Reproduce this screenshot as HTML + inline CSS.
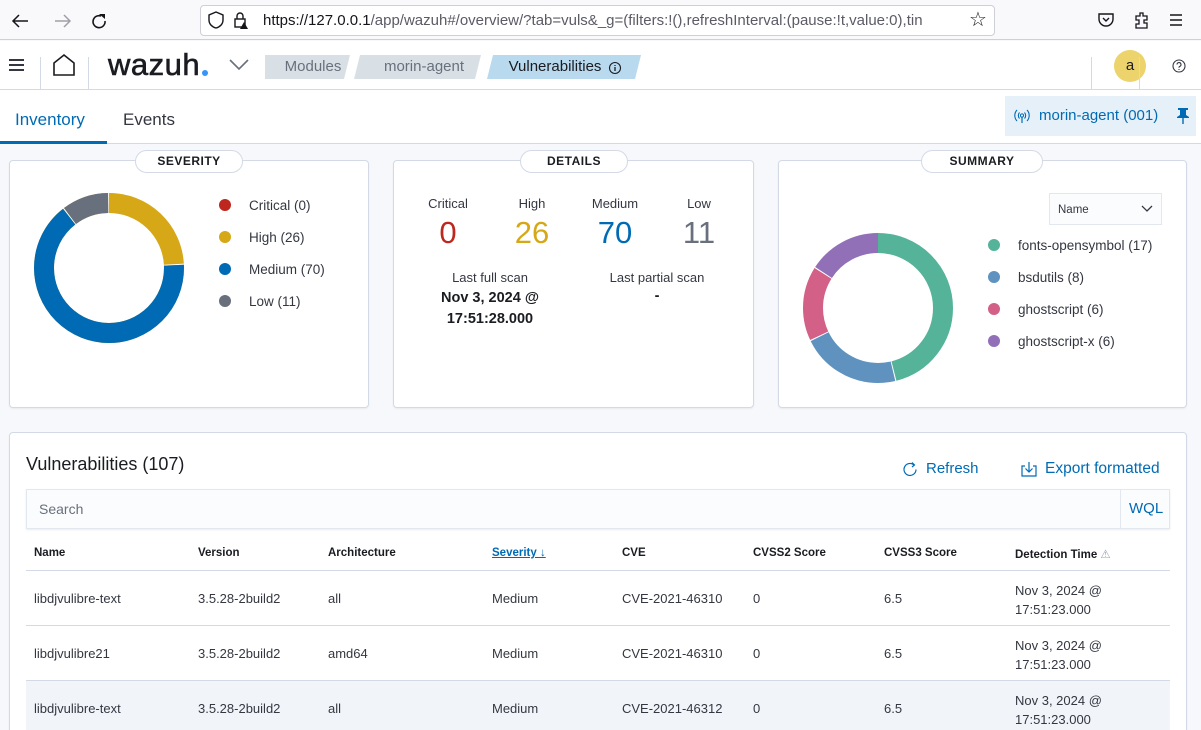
<!DOCTYPE html>
<html style="height:730px;overflow:hidden"><head><meta charset="utf-8">
<style>
*{box-sizing:border-box;margin:0;padding:0}
body{width:1201px;height:730px;overflow:hidden;background:#f7f8fc;font-family:"Liberation Sans",sans-serif;color:#343741;position:relative}
.abs{position:absolute}
.browser{left:0;top:0;width:1201px;height:40px;background:#f9f9fb;border-bottom:1px solid #cfcfd8}
.url{left:200px;top:5px;width:795px;height:31px;border:1px solid #cfcfd8;border-radius:4px;background:#fff;font-size:15px;color:#5b5b66;line-height:29px;padding-left:62px;white-space:nowrap;overflow:hidden}
.url b{font-weight:normal;color:#15141a}
.hdr{left:0;top:41px;width:1201px;height:49px;background:#fff;border-bottom:1px solid #d3dae6}
.vsep{width:1px;background:#d3dae6}
.crumb{top:55px;height:24px;line-height:24px;font-size:15px;text-align:center}
.tabs{left:0;top:90px;width:1201px;height:54px;background:#fff;border-bottom:1px solid #d3dae6}
.panel{background:#fff;border:1px solid #d3dae6;border-radius:4px;box-shadow:0 1px 2px rgba(0,0,0,.06)}
.ptitle{height:23px;border:1px solid #d3dae6;border-radius:12px;background:#fff;font-weight:bold;font-size:12px;letter-spacing:.5px;text-align:center;line-height:21px;color:#1a1c21}
.leg{font-size:13.5px;color:#343741}
.dot{width:12px;height:12px;border-radius:50%;display:inline-block}
.th{font-size:11.5px;font-weight:bold;color:#1a1c21}
.td{font-size:13px;color:#343741}
.rowline{height:1px;background:#d3dae6}
</style></head><body>
<div class="abs browser"></div>
<svg class="abs" style="left:8px;top:10px" width="110" height="22" viewBox="0 0 110 22">
<path d="M20 11H5M11 5l-6 6 6 6" fill="none" stroke="#15141a" stroke-width="1.5"/>
<path d="M47 11h15M56 5l6 6-6 6" fill="none" stroke="#a0a0a8" stroke-width="1.5"/>
<path d="M93 6a6 6 0 1 0 4 5" fill="none" stroke="#15141a" stroke-width="1.6"/><path d="M91 4h6v5z" fill="#15141a"/>
</svg>
<div class="abs url"><b>https://</b><b style="color:#15141a">127.0.0.1</b>/app/wazuh#/overview/?tab=vuls&amp;_g=(filters:!(),refreshInterval:(pause:!t,value:0),tin</div>
<svg class="abs" style="left:208px;top:10px" width="48" height="20"><path d="M8 2l7 3v5c0 4-3 7-7 8-4-1-7-4-7-8V5z" fill="none" stroke="#15141a" stroke-width="1.4"/><rect x="27" y="9" width="10" height="8" fill="none" stroke="#15141a" stroke-width="1.4"/><path d="M29 9V6a3 3 0 0 1 6 0v3" fill="none" stroke="#15141a" stroke-width="1.4"/><path d="M36 12l4 7h-8z" fill="#15141a"/></svg>
<div class="abs" style="left:969px;top:7px;font-size:20px;color:#15141a">☆</div>
<svg class="abs" style="left:1096px;top:10px" width="100" height="20"><path d="M3 4h14v5a7 7 0 0 1-14 0z" fill="none" stroke="#15141a" stroke-width="1.4"/><path d="M7 8l3 3 3-3" fill="none" stroke="#15141a" stroke-width="1.4"/><path d="M40 6h4V3h3v3h4v4h-3v3h3v5H40v-4h3v-4h-3z" fill="none" stroke="#15141a" stroke-width="1.3"/><path d="M74 5h12M74 10h12M74 15h12" stroke="#15141a" stroke-width="1.5"/></svg>

<div class="abs hdr"></div>
<svg class="abs" style="left:8px;top:57px" width="18" height="16"><path d="M1 3h15M1 8h15M1 13h15" stroke="#343741" stroke-width="2"/></svg>
<div class="abs vsep" style="left:40px;top:57px;height:33px"></div>
<svg class="abs" style="left:52px;top:53px" width="24" height="24"><path d="M2 22V10l10-8 10 8v12z" fill="none" stroke="#1a1c21" stroke-width="1.6"/></svg>
<div class="abs vsep" style="left:88px;top:57px;height:33px"></div>
<div class="abs" style="left:108px;top:47px;font-size:31px;color:#1a1c21;letter-spacing:.5px;-webkit-text-stroke:0.6px #1a1c21">wazuh</div>
<div class="abs" style="left:202px;top:70px;width:6px;height:6px;border-radius:50%;background:#3595f9"></div>
<svg class="abs" style="left:229px;top:59px" width="20" height="12"><path d="M1 1l9 9 9-9" fill="none" stroke="#69707d" stroke-width="1.6"/></svg>
<svg class="abs" style="left:264px;top:55px" width="380" height="24">
<polygon points="1,0 86,0 80,24 1,24" fill="#d9e0e5"/>
<polygon points="96,0 217,0 211,24 90,24" fill="#d9e0e5"/>
<polygon points="229,0 377,0 371,24 223,24" fill="#b8d9ee"/>
</svg>
<div class="abs crumb" style="left:270px;width:86px;color:#69707d">Modules</div>
<div class="abs crumb" style="left:354px;width:140px;color:#69707d">morin-agent</div>
<div class="abs crumb" style="left:500px;width:110px;color:#1a1c21">Vulnerabilities</div>
<svg class="abs" style="left:608px;top:61px" width="14" height="14"><circle cx="7" cy="7" r="5.5" fill="none" stroke="#1a1c21" stroke-width="1.1"/><path d="M7 6v4M7 4v1" stroke="#1a1c21" stroke-width="1.3"/></svg>
<div class="abs vsep" style="left:1091px;top:57px;height:33px"></div>
<div class="abs" style="left:1114px;top:50px;width:32px;height:32px;border-radius:50%;background:#ecd36c;text-align:center;line-height:31px;font-size:15px;color:#1a1c21">a</div>
<div class="abs vsep" style="left:1139px;top:57px;height:33px"></div>
<svg class="abs" style="left:1172px;top:59px" width="14" height="14"><circle cx="7" cy="7" r="6" fill="none" stroke="#343741" stroke-width="1.1"/><path d="M5 5.5a2 2 0 1 1 2.5 2c-.5.2-.5.6-.5 1.2M7 10v1" fill="none" stroke="#343741" stroke-width="1.1"/></svg>

<div class="abs tabs"></div>
<div class="abs" style="left:15px;top:110px;font-size:17px;color:#006bb4">Inventory</div>
<div class="abs" style="left:0;top:141px;width:107px;height:3px;background:#006bb4"></div>
<div class="abs" style="left:123px;top:110px;font-size:17px;color:#343741">Events</div>
<div class="abs" style="left:1005px;top:96px;width:191px;height:40px;background:#e6f0f8"></div>
<svg class="abs" style="left:1013px;top:107px" width="18" height="18"><path d="M4 3a8 8 0 0 0 0 11M14 3a8 8 0 0 1 0 11M6.5 5.5a4.5 4.5 0 0 0 0 6M11.5 5.5a4.5 4.5 0 0 1 0 6" fill="none" stroke="#006bb4" stroke-width="1.1"/><circle cx="9" cy="8.5" r="1.6" fill="none" stroke="#006bb4"/><path d="M9 10v6" stroke="#006bb4" stroke-width="1.2"/></svg>
<div class="abs" style="left:1039px;top:107px;font-size:15px;color:#006bb4">morin-agent (001)</div>
<svg class="abs" style="left:1176px;top:107px" width="14" height="18"><path d="M2 1h10v2h-2v5l3 2v1H1v-1l3-2V3H2z M6.3 11h1.4v6H6.3z" fill="#006bb4"/></svg>

<div class="abs panel" style="left:9px;top:160px;width:360px;height:248px"></div>
<div class="abs ptitle" style="left:135px;top:150px;width:108px">SEVERITY</div>
<svg class="abs" style="left:34px;top:193px" width="150" height="150" viewBox="0 0 150 150">
<g transform="rotate(-90 75 75)" fill="none" stroke-width="20">
<circle cx="75" cy="75" r="65" stroke="#d6a717" stroke-dasharray="98.2 1 266.2 1 41 1"/>
<circle cx="75" cy="75" r="65" stroke="#006bb4" stroke-dasharray="0 99.2 266.2 400"/>
<circle cx="75" cy="75" r="65" stroke="#69707d" stroke-dasharray="0 366.4 41 400"/>
</g>
</svg>
<div class="abs leg" style="left:219px;top:198px"><span class="dot" style="background:#bd271e;vertical-align:-1px"></span><span style="margin-left:18px">Critical (0)</span></div>
<div class="abs leg" style="left:219px;top:230px"><span class="dot" style="background:#d6a717;vertical-align:-1px"></span><span style="margin-left:18px">High (26)</span></div>
<div class="abs leg" style="left:219px;top:262px"><span class="dot" style="background:#006bb4;vertical-align:-1px"></span><span style="margin-left:18px">Medium (70)</span></div>
<div class="abs leg" style="left:219px;top:294px"><span class="dot" style="background:#69707d;vertical-align:-1px"></span><span style="margin-left:18px">Low (11)</span></div>

<div class="abs panel" style="left:393px;top:160px;width:361px;height:248px"></div>
<div class="abs ptitle" style="left:520px;top:150px;width:108px">DETAILS</div>
<div class="abs" style="left:408px;top:196px;width:80px;text-align:center;font-size:13px">Critical</div>
<div class="abs" style="left:492px;top:196px;width:80px;text-align:center;font-size:13px">High</div>
<div class="abs" style="left:575px;top:196px;width:80px;text-align:center;font-size:13px">Medium</div>
<div class="abs" style="left:659px;top:196px;width:80px;text-align:center;font-size:13px">Low</div>
<div class="abs" style="left:408px;top:215px;width:80px;text-align:center;font-size:31px;color:#bd271e">0</div>
<div class="abs" style="left:492px;top:215px;width:80px;text-align:center;font-size:31px;color:#d6a717">26</div>
<div class="abs" style="left:575px;top:215px;width:80px;text-align:center;font-size:31px;color:#006bb4">70</div>
<div class="abs" style="left:659px;top:215px;width:80px;text-align:center;font-size:31px;color:#69707d">11</div>
<div class="abs" style="left:400px;top:270px;width:180px;text-align:center;font-size:13px">Last full scan</div>
<div class="abs" style="left:400px;top:288px;width:180px;text-align:center;font-size:14.5px;font-weight:bold;line-height:21px;color:#1a1c21">Nov 3, 2024 @<br>17:51:28.000</div>
<div class="abs" style="left:567px;top:270px;width:180px;text-align:center;font-size:13px">Last partial scan</div>
<div class="abs" style="left:567px;top:288px;width:180px;text-align:center;font-size:14.5px;font-weight:bold;color:#1a1c21">-</div>

<div class="abs panel" style="left:778px;top:160px;width:409px;height:248px"></div>
<div class="abs ptitle" style="left:921px;top:150px;width:122px">SUMMARY</div>
<div class="abs" style="left:1049px;top:193px;width:113px;height:32px;border:1px solid #e3e8f0;background:#fbfcfd;font-size:11.5px;line-height:32px;padding-left:8px">Name</div>
<svg class="abs" style="left:1141px;top:205px" width="12" height="8"><path d="M1 1l5 5 5-5" fill="none" stroke="#343741" stroke-width="1.3"/></svg>
<svg class="abs" style="left:803px;top:233px" width="150" height="150" viewBox="0 0 150 150">
<g transform="rotate(-90 75 75)" fill="none" stroke-width="20">
<circle cx="75" cy="75" r="65" stroke="#54b399" stroke-dasharray="188 500"/>
<circle cx="75" cy="75" r="65" stroke="#6092c0" stroke-dasharray="0 189 87.5 500"/>
<circle cx="75" cy="75" r="65" stroke="#d36086" stroke-dasharray="0 277.5 65.2 500"/>
<circle cx="75" cy="75" r="65" stroke="#9170b8" stroke-dasharray="0 343.7 64.7 500"/>
</g>
</svg>
<div class="abs leg" style="left:988px;top:238px"><span class="dot" style="background:#54b399;vertical-align:-1px"></span><span style="margin-left:18px">fonts-opensymbol (17)</span></div>
<div class="abs leg" style="left:988px;top:270px"><span class="dot" style="background:#6092c0;vertical-align:-1px"></span><span style="margin-left:18px">bsdutils (8)</span></div>
<div class="abs leg" style="left:988px;top:302px"><span class="dot" style="background:#d36086;vertical-align:-1px"></span><span style="margin-left:18px">ghostscript (6)</span></div>
<div class="abs leg" style="left:988px;top:334px"><span class="dot" style="background:#9170b8;vertical-align:-1px"></span><span style="margin-left:18px">ghostscript-x (6)</span></div>

<div class="abs panel" style="left:9px;top:432px;width:1178px;height:310px"></div>
<div class="abs" style="left:26px;top:454px;font-size:18px;color:#1a1c21">Vulnerabilities (107)</div>
<svg class="abs" style="left:902px;top:461px" width="16" height="16"><path d="M12 4a6 6 0 1 0 2 4.5" fill="none" stroke="#006bb4" stroke-width="1.2"/><path d="M10 1.5l2.5 2.5-2.5 2" fill="none" stroke="#006bb4" stroke-width="1.2"/></svg>
<div class="abs" style="left:926px;top:460px;font-size:15px;color:#006bb4">Refresh</div>
<svg class="abs" style="left:1020px;top:461px" width="18" height="16"><path d="M5 5H2v10h14V5h-3M9 1v10M5.5 7.5L9 11l3.5-3.5" fill="none" stroke="#006bb4" stroke-width="1.2"/></svg>
<div class="abs" style="left:1045px;top:460px;font-size:15.5px;color:#006bb4">Export formatted</div>
<div class="abs" style="left:26px;top:489px;width:1144px;height:40px;background:#fbfcfd;border:1px solid #e3e8f0;box-shadow:0 1px 2px rgba(0,0,0,.08)"></div>
<div class="abs" style="left:1120px;top:490px;width:1px;height:38px;background:#e3e8f0"></div>
<div class="abs" style="left:39px;top:501px;font-size:14px;color:#69707d">Search</div>
<div class="abs" style="left:1129px;top:500px;font-size:15px;color:#006bb4">WQL</div>

<div class="abs th" style="left:34px;top:547px">Name</div>
<div class="abs th" style="left:198px;top:547px">Version</div>
<div class="abs th" style="left:328px;top:547px">Architecture</div>
<div class="abs th" style="left:492px;top:547px;color:#006bb4;text-decoration:underline">Severity <span style="text-decoration:none;font-weight:normal">↓</span></div>
<div class="abs th" style="left:622px;top:547px">CVE</div>
<div class="abs th" style="left:753px;top:547px">CVSS2 Score</div>
<div class="abs th" style="left:884px;top:547px">CVSS3 Score</div>
<div class="abs th" style="left:1015px;top:547px">Detection Time <span style="font-weight:normal;color:#98a2b3">⚠</span></div>
<div class="abs rowline" style="left:26px;top:570px;width:1144px"></div>
<div class="abs rowline" style="left:26px;top:625px;width:1144px"></div>
<div class="abs" style="left:26px;top:681px;width:1144px;height:49px;background:#f1f5f9"></div>
<div class="abs rowline" style="left:26px;top:680px;width:1144px"></div>

<div class="abs td" style="left:34px;top:591px">libdjvulibre-text</div>
<div class="abs td" style="left:198px;top:591px">3.5.28-2build2</div>
<div class="abs td" style="left:328px;top:591px">all</div>
<div class="abs td" style="left:492px;top:591px">Medium</div>
<div class="abs td" style="left:622px;top:591px">CVE-2021-46310</div>
<div class="abs td" style="left:753px;top:591px">0</div>
<div class="abs td" style="left:884px;top:591px">6.5</div>
<div class="abs td" style="left:1015px;top:581px;line-height:19px">Nov 3, 2024 @<br>17:51:23.000</div>

<div class="abs td" style="left:34px;top:646px">libdjvulibre21</div>
<div class="abs td" style="left:198px;top:646px">3.5.28-2build2</div>
<div class="abs td" style="left:328px;top:646px">amd64</div>
<div class="abs td" style="left:492px;top:646px">Medium</div>
<div class="abs td" style="left:622px;top:646px">CVE-2021-46310</div>
<div class="abs td" style="left:753px;top:646px">0</div>
<div class="abs td" style="left:884px;top:646px">6.5</div>
<div class="abs td" style="left:1015px;top:636px;line-height:19px">Nov 3, 2024 @<br>17:51:23.000</div>

<div class="abs td" style="left:34px;top:701px">libdjvulibre-text</div>
<div class="abs td" style="left:198px;top:701px">3.5.28-2build2</div>
<div class="abs td" style="left:328px;top:701px">all</div>
<div class="abs td" style="left:492px;top:701px">Medium</div>
<div class="abs td" style="left:622px;top:701px">CVE-2021-46312</div>
<div class="abs td" style="left:753px;top:701px">0</div>
<div class="abs td" style="left:884px;top:701px">6.5</div>
<div class="abs td" style="left:1015px;top:691px;line-height:19px">Nov 3, 2024 @<br>17:51:23.000</div>
</body></html>
